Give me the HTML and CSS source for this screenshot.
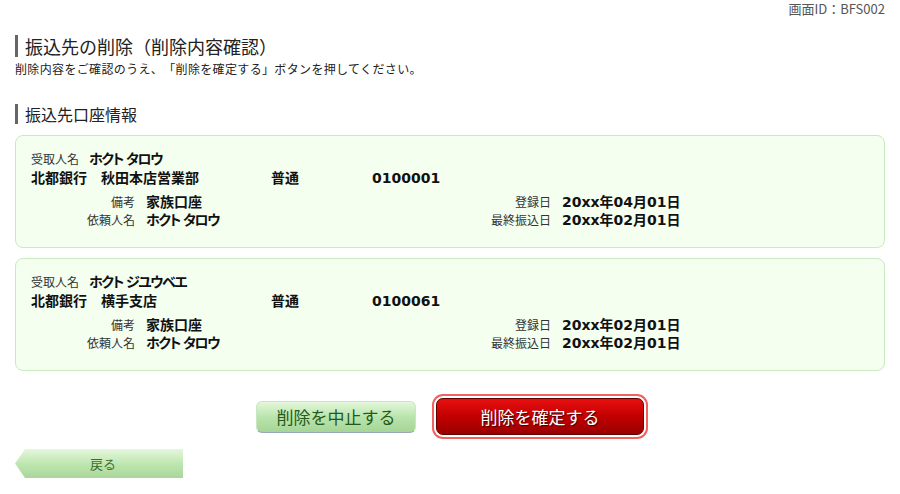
FILE: index.html
```html
<!DOCTYPE html>
<html lang="ja">
<head>
  <meta charset="UTF-8">
  <meta name="viewport" content="width=device-width, initial-scale=1.0">
  <title>振込先の削除（削除内容確認）</title>
  <link rel="stylesheet" href="styles.css">
</head>
<body>
  <div class="page">
    <!-- Screen ID -->
    <div class="screen-id">画面ID：BFS002</div>

    <h1 class="page-title">振込先の削除（削除内容確認）</h1>
    <p class="lead">削除内容をご確認のうえ、「削除を確定する」ボタンを押してください。</p>

    <h2 class="section-title">振込先口座情報</h2>

    <!-- Payee cards -->
    <div class="payee-card">
      <div class="payee-name"><span class="label">受取人名</span><span class="value kana">ホクト タロウ</span></div>
      <div class="account-row">
        <span class="value">北都銀行　秋田本店営業部</span>
        <span class="value">普通</span>
        <span class="value">0100001</span>
      </div>
      <div class="detail-grid">
        <span class="label right">備考</span><span class="value">家族口座</span>
        <span class="label right">登録日</span><span class="value">20xx年04月01日</span>
        <span class="label right">依頼人名</span><span class="value kana">ホクト タロウ</span>
        <span class="label right">最終振込日</span><span class="value">20xx年02月01日</span>
      </div>
    </div>

    <div class="payee-card">
      <div class="payee-name"><span class="label">受取人名</span><span class="value kana">ホクト ジユウベエ</span></div>
      <div class="account-row">
        <span class="value">北都銀行　横手支店</span>
        <span class="value">普通</span>
        <span class="value">0100061</span>
      </div>
      <div class="detail-grid">
        <span class="label right">備考</span><span class="value">家族口座</span>
        <span class="label right">登録日</span><span class="value">20xx年02月01日</span>
        <span class="label right">依頼人名</span><span class="value kana">ホクト タロウ</span>
        <span class="label right">最終振込日</span><span class="value">20xx年02月01日</span>
      </div>
    </div>

    <!-- Actions -->
    <div class="actions">
      <button class="btn-cancel">削除を中止する</button>
      <button class="btn-confirm">削除を確定する</button>
    </div>

    <button class="btn-back">戻る</button>
  </div>
</body>
</html>
```

FILE: styles.css
```css
/* General Reset */
* {
  margin: 0;
  padding: 0;
  box-sizing: border-box;
}

body {
  font-family: "Noto Sans CJK JP", "Noto Sans", sans-serif;
  background-color: #FFFFFF;
  color: #222222;
  text-spacing-trim: space-all;
}

.page {
  padding: 0 15px;
}

/* Screen ID */
.screen-id {
  text-align: right;
  font-size: 13px;
  line-height: 18px;
  color: #555555;
}

/* Headings */
.page-title {
  margin-top: 17px;
  font-size: 18px;
  font-weight: normal;
  line-height: 22px;
  border-left: 3px solid #666666;
  padding-left: 7px;
}

.lead {
  font-size: 12px;
  line-height: 16px;
  letter-spacing: 0.35px;
  margin-top: 4px;
}

.section-title {
  margin-top: 27px;
  font-size: 16px;
  font-weight: normal;
  line-height: 20px;
  border-left: 3px solid #666666;
  padding-left: 7px;
}

/* Payee Card */
.payee-card {
  margin-top: 11px;
  background-color: #F4FFF0;
  border: 1px solid #C6EBC0;
  border-radius: 8px;
  padding: 14px 15px 18px;
}

.payee-card + .payee-card {
  margin-top: 10px;
}

.label {
  font-size: 12px;
  color: #333333;
}

.value {
  font-family: "DejaVu Sans", "Noto Sans CJK JP", sans-serif;
  font-size: 14px;
  font-weight: bold;
  color: #111111;
  font-feature-settings: "palt";
}

.kana {
  letter-spacing: -1.5px;
}

.right {
  text-align: right;
}

.payee-name {
  display: flex;
  align-items: baseline;
  gap: 10px;
  line-height: 18px;
}

.account-row {
  display: grid;
  grid-template-columns: 240px 101px auto;
  line-height: 20px;
}

.detail-grid {
  display: grid;
  grid-template-columns: 104px 290px 104px auto;
  column-gap: 11px;
  align-items: baseline;
  line-height: 18px;
  margin-top: 5px;
}

/* Buttons */
.actions {
  display: flex;
  justify-content: center;
  align-items: center;
  gap: 20px;
  margin-top: 27px;
}

.btn-cancel {
  font-family: inherit;
  width: 160px;
  height: 32px;
  font-size: 17px;
  color: #245A1A;
  background: linear-gradient(#E4F7DC, #B9E4AC 50%, #A6D597);
  border: 1px solid #C8E6C0;
  border-bottom-color: #98A8B8;
  border-radius: 6px;
  cursor: pointer;
}

.btn-confirm {
  font-family: inherit;
  width: 208px;
  height: 37px;
  font-size: 17px;
  color: #FFFFFF;
  text-shadow: 1px 1px 1px #400000;
  background: linear-gradient(#E81010, #C20000 50%, #9A0000);
  border: 1px solid #600000;
  border-radius: 7px;
  box-shadow: 0 0 0 2px #FFFFFF, 0 0 0 4px #F36060;
  cursor: pointer;
}

.btn-back {
  display: block;
  font-family: inherit;
  margin-top: 14px;
  width: 168px;
  height: 29px;
  padding-left: 8px;
  font-size: 13px;
  color: #3E6E30;
  background: linear-gradient(#E4F7DC, #BCE5AE 55%, #A9D69A);
  border: none;
  clip-path: polygon(0 50%, 10px 0, 100% 0, 100% 100%, 10px 100%);
  cursor: pointer;
}
```
